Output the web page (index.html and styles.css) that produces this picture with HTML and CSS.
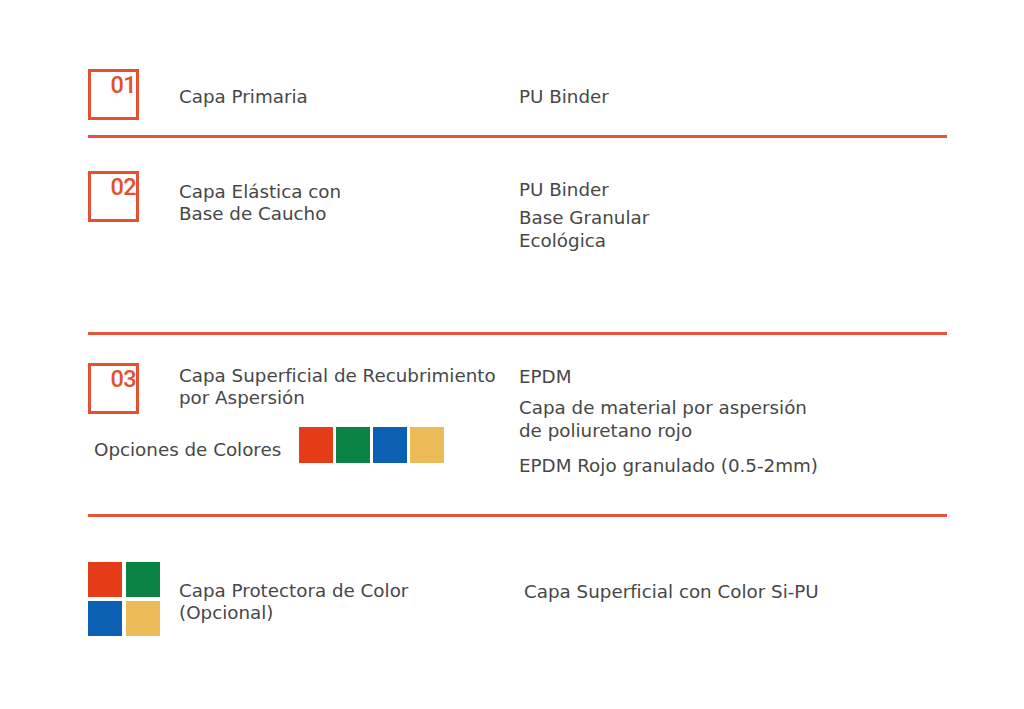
FILE: index.html
```html
<!DOCTYPE html>
<html lang="es">
<head>
<meta charset="utf-8">
<title>Capas</title>
<link rel="stylesheet" href="styles.css">
</head>
<body>
<main class="sheet">
  <section class="layer layer-1">
    <div class="num-box"><span>01</span></div>
    <div class="name">Capa Primaria</div>
    <div class="mats"><p>PU Binder</p></div>
  </section>
  <div class="rule rule-1"></div>

  <section class="layer layer-2">
    <div class="num-box"><span>02</span></div>
    <div class="name">Capa Elástica con<br>Base de Caucho</div>
    <div class="mats">
      <p>PU Binder</p>
      <p class="gap-5">Base Granular<br>Ecológica</p>
    </div>
  </section>
  <div class="rule rule-2"></div>

  <section class="layer layer-3">
    <div class="num-box"><span>03</span></div>
    <div class="name">Capa Superficial de Recubrimiento<br>por Aspersión</div>
    <div class="mats">
      <p>EPDM</p>
      <p class="gap-8">Capa de material por aspersión<br>de poliuretano rojo</p>
      <p class="gap-12">EPDM Rojo granulado (0.5-2mm)</p>
    </div>
    <div class="options">
      <span class="options-label">Opciones de Colores</span>
      <div class="swatches">
        <span class="sw red"></span>
        <span class="sw green"></span>
        <span class="sw blue"></span>
        <span class="sw yellow"></span>
      </div>
    </div>
  </section>
  <div class="rule rule-3"></div>

  <section class="layer layer-4">
    <div class="quad">
      <span class="sw red"></span>
      <span class="sw green"></span>
      <span class="sw blue"></span>
      <span class="sw yellow"></span>
    </div>
    <div class="name">Capa Protectora de Color<br>(Opcional)</div>
    <div class="mats"><p>Capa Superficial con Color Si-PU</p></div>
  </section>
</main>
</body>
</html>
```

FILE: styles.css
```css
html, body {
  margin: 0;
  padding: 0;
  background: #ffffff;
}

body {
  font-family: "DejaVu Sans", Verdana, sans-serif;
  font-size: 18.3px;
  color: #474747;
}

.sheet {
  width: 859px;
  margin-left: 88px;
  padding-top: 69px;
}

.layer {
  display: grid;
  grid-template-columns: 91px 340px 1fr;
  align-items: start;
}

.num-box {
  box-sizing: border-box;
  width: 51px;
  height: 51px;
  border: 3px solid #e5512f;
  text-align: right;
  padding: 1px 0 0 0;
}

.num-box span {
  font-family: Roboto, "Liberation Sans", sans-serif;
  font-weight: 500;
  font-size: 23.5px;
  line-height: 24px;
  letter-spacing: -0.6px;
  color: #e4502e;
  display: inline-block;
}

.name {
  line-height: 22px;
  white-space: nowrap;
}

.mats p {
  margin: 0;
  line-height: 23px;
  white-space: nowrap;
}

.gap-5 { margin-top: 5px !important; }
.gap-8 { margin-top: 8px !important; }
.gap-12 { margin-top: 12px !important; }

.rule {
  height: 3px;
  background: #e4553a;
}

/* section 1 */
.layer-1 .name { padding-top: 17px; }
.layer-1 .mats { padding-top: 16px; }
.rule-1 { margin-top: 15px; }

/* section 2 */
.layer-2 { margin-top: 33px; }
.layer-2 .name { padding-top: 10px; }
.layer-2 .mats { padding-top: 7px; }
.rule-2 { margin-top: 80px; }

/* section 3 */
.layer-3 {
  margin-top: 28px;
  grid-template-rows: 51px auto;
}
.layer-3 .name { padding-top: 2px; }
.layer-3 .mats {
  padding-top: 2px;
  grid-column: 3;
  grid-row: 1 / span 2;
}
.options {
  grid-column: 1 / span 2;
  grid-row: 2;
  display: flex;
  align-items: flex-start;
  margin-top: 13px;
  padding-left: 6px;
}
.options-label {
  width: 205px;
  flex: none;
  line-height: 22px;
  padding-top: 12px;
}
.swatches {
  display: flex;
  gap: 3px;
}
.swatches .sw {
  width: 34px;
  height: 36px;
}
.rule-3 { margin-top: 37px; }

/* section 4 */
.layer-4 { margin-top: 45px; }
.layer-4 .name { padding-top: 18px; }
.layer-4 .mats { padding-top: 18px; padding-left: 5px; }

.quad {
  display: grid;
  grid-template-columns: 34px 34px;
  grid-template-rows: 35px 35px;
  gap: 4px;
}

.sw { display: block; }
.red { background: #e33c16; }
.green { background: #0b8443; }
.blue { background: #0b60b3; }
.yellow { background: #eabb56; }
```
